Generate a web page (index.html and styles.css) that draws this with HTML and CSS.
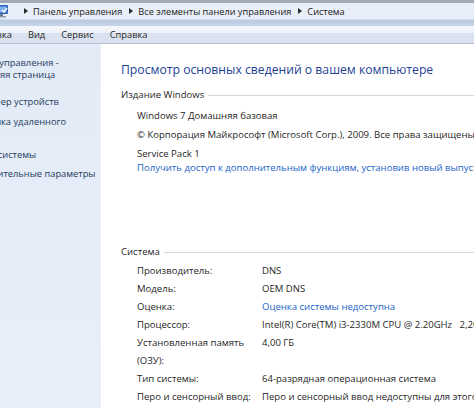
FILE: index.html
```html
<!DOCTYPE html>
<html lang="ru">
<head>
<meta charset="utf-8">
<title>Система</title>
<link rel="stylesheet" href="styles.css">
</head>
<body>
<div class="window">
  <div class="top-strip"></div>
  <div class="address">
    <svg class="addr-icon" width="16" height="14" viewBox="0 0 16 14">
      <rect x="1" y="1" width="14" height="9" rx="1" fill="#2f63b8"/>
      <rect x="2.5" y="2.5" width="11" height="6" fill="#7fb0ec"/>
      <path d="M9 6 l2 2 l3-4" stroke="#ffffff" stroke-width="1.4" fill="none"/>
      <rect x="6" y="10" width="4" height="2" fill="#6a7c96"/>
      <rect x="3" y="12" width="10" height="1.5" fill="#8a9ab0"/>
    </svg>
    <span class="crumb-arrow first-arrow"></span>
    <span class="crumb">Панель управления</span>
    <span class="crumb-arrow"></span>
    <span class="crumb">Все элементы панели управления</span>
    <span class="crumb-arrow"></span>
    <span class="crumb">Система</span>
  </div>
  <div class="band"></div>
  <div class="menubar">
    <span class="menu-item">Правка</span>
    <span class="menu-item">Вид</span>
    <span class="menu-item">Сервис</span>
    <span class="menu-item">Справка</span>
  </div>
  <div class="main">
    <aside class="sidebar">
      <div class="side-link home">Панель управления -<br>домашняя страница</div>
      <div class="side-link l-dev">Диспетчер устройств</div>
      <div class="side-link l-remote">Настройка удаленного</div>
      <div class="side-link l-protect">Защита системы</div>
      <div class="side-link l-adv">Дополнительные параметры</div>
    </aside>
    <section class="content">
      <h1 class="title">Просмотр основных сведений о вашем компьютере</h1>

      <div class="group-head edition-head"><span>Издание Windows</span><i class="rule"></i></div>
      <div class="ed-line first">Windows 7 Домашняя базовая</div>
      <div class="ed-line">© Корпорация Майкрософт (Microsoft Corp.), 2009. Все права защищены.</div>
      <div class="ed-line">Service Pack 1</div>
      <div class="ed-line link tight">Получить доступ к дополнительным функциям, установив новый выпуск Windows 7</div>

      <div class="group-head system-head"><span>Система</span><i class="rule"></i></div>
      <div class="sys-grid">
        <div class="lbl">Производитель:</div><div class="val">DNS</div>
        <div class="lbl">Модель:</div><div class="val">OEM DNS</div>
        <div class="lbl">Оценка:</div><div class="val link">Оценка системы недоступна</div>
        <div class="lbl">Процессор:</div><div class="val">Intel(R) Core(TM) i3-2330M CPU @ 2.20GHz&nbsp;&nbsp;&nbsp;2,20 GHz</div>
        <div class="lbl">Установленная память (ОЗУ):</div><div class="val">4,00 ГБ</div>
        <div class="lbl">Тип системы:</div><div class="val">64-разрядная операционная система</div>
        <div class="lbl">Перо и сенсорный ввод:</div><div class="val">Перо и сенсорный ввод недоступны для этого экрана</div>
      </div>
    </section>
  </div>
</div>
</body>
</html>
```
FILE: styles.css
```css
html, body {
  margin: 0;
  padding: 0;
  background: #ffffff;
}
body {
  font-family: "Open Sans", "Noto Sans", sans-serif;
  font-size: 9.3px;
  color: #1f1f1f;
  width: 474px;
  height: 408px;
  overflow: hidden;
}
.window {
  display: flex;
  flex-direction: column;
  height: 408px;
}
.top-strip {
  height: 3px;
  background: #a3aab6;
}
.address {
  height: 16px;
  background: #e9eff8;
  display: flex;
  align-items: center;
  white-space: nowrap;
  overflow: hidden;
  color: #1a1a1a;
  font-size: 9.2px;
}
.addr-icon {
  margin-left: -7px;
  flex: none;
}
.crumb-arrow {
  flex: none;
  width: 0;
  height: 0;
  border-left: 4px solid #2a2a2a;
  border-top: 3px solid transparent;
  border-bottom: 3px solid transparent;
  margin: 0 5px 0 7px;
}
.crumb-arrow.first-arrow {
  margin-left: 15px;
}
.crumb {
  flex: none;
}
.band {
  height: 7px;
  background: linear-gradient(#b9cae1, #c7d5e8);
  border-top: 1px solid #d2dcea;
  box-sizing: border-box;
}
.menubar {
  height: 17px;
  background: linear-gradient(#f5f7fb 0%, #eef2f8 40%, #dbe2ef 41%, #dbe2ef 100%);
  border-bottom: 1px solid #b4bfd3;
  display: flex;
  align-items: center;
  gap: 16px;
  white-space: nowrap;
  overflow: hidden;
}
.menu-item:first-child {
  margin-left: -21px;
}
.main {
  flex: 1;
  display: flex;
  min-height: 0;
}
.sidebar {
  width: 101px;
  flex: none;
  background: linear-gradient(#e3ebf7, #e8eff9);
  border-right: 1px solid #edf2fa;
  box-sizing: border-box;
  overflow: hidden;
  color: #1e3a5c;
  line-height: 12px;
  padding-top: 13px;
}
.side-link {
  white-space: nowrap;
  margin-left: -37px;
}
.l-dev { margin-top: 15px; }
.l-remote { margin-top: 8px; }
.l-protect { margin-top: 21px; margin-left: -39px; }
.l-adv { margin-top: 7px; }
.content {
  flex: 1;
  min-width: 0;
  padding: 18px 0 0 20px;
  overflow: hidden;
  font-size: 9.55px;
}
.title {
  margin: 0;
  font-weight: normal;
  font-size: 12.2px;
  line-height: 16px;
  color: #1e3f96;
  white-space: nowrap;
}
.group-head {
  display: flex;
  align-items: center;
  line-height: 14px;
  white-space: nowrap;
}
.group-head .rule {
  flex: 1;
  height: 1px;
  background: #d3d9e2;
  margin-left: 4px;
  margin-top: 1px;
}
.edition-head { margin-top: 10px; }
.system-head { margin-top: 70px; }
.ed-line {
  margin-left: 16px;
  margin-top: 5px;
  line-height: 14px;
  white-space: nowrap;
}
.ed-line.first { margin-top: 7px; }
.ed-line.tight { margin-top: 0; }
.link { color: #1a64c8; }
.sys-grid {
  margin-top: 3px;
  margin-left: 16px;
  display: grid;
  grid-template-columns: 125px 1fr;
  line-height: 18px;
}
.lbl {
  padding-right: 8px;
}
.val {
  white-space: nowrap;
}
```
